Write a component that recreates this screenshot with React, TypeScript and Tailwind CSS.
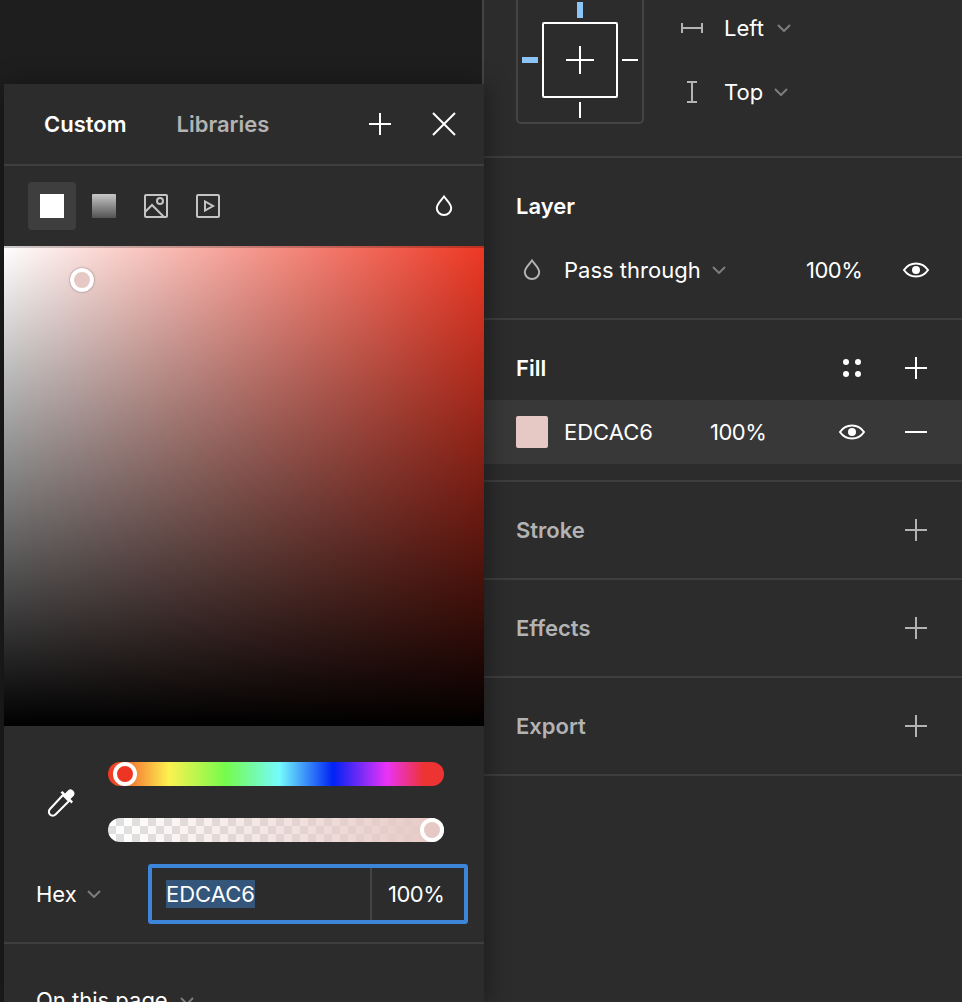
const Plus = ({ color = "#ffffff" }: { color?: string }) => (
  <svg width="32" height="32" viewBox="0 0 32 32" fill="none" stroke={color} strokeWidth="2">
    <path d="M5 16H27M16 5V27" />
  </svg>
);

const Eye = () => (
  <svg width="32" height="32" viewBox="0 0 32 32" fill="none">
    <path d="M4 16C7 11.5 11 9.5 16 9.5C21 9.5 25 11.5 28 16C25 20.5 21 22.5 16 22.5C11 22.5 7 20.5 4 16Z" stroke="#ffffff" strokeWidth="2" />
    <circle cx="16" cy="16" r="4" fill="#ffffff" />
  </svg>
);

const Drop = ({ color }: { color: string }) => (
  <svg width="32" height="32" viewBox="0 0 32 32" fill="none">
    <path d="M16 6.5C13 10.5 8.8 14 8.8 18C8.8 22.2 12 25 16 25C20 25 23.2 22.2 23.2 18C23.2 14 19 10.5 16 6.5Z" stroke={color} strokeWidth="2" />
  </svg>
);

const Chevron = () => (
  <svg width="14" height="8" viewBox="0 0 14 8" fill="none" stroke="#7d7d7d" strokeWidth="2">
    <path d="M1 1L7 7L13 1" />
  </svg>
);

function Constraints() {
  return (
    <svg width="128" height="128" viewBox="0 0 128 128" fill="none" className="shrink-0">
      <rect x="1" y="1" width="126" height="126" rx="4" stroke="#444444" strokeWidth="2" />
      <rect x="27" y="27" width="74" height="74" rx="1" stroke="#ffffff" strokeWidth="2" />
      <path d="M50 64H78M64 50V78" stroke="#ffffff" strokeWidth="2" />
      <rect x="61" y="6" width="6" height="16" fill="#8cc4f5" />
      <rect x="6" y="61" width="16" height="6" fill="#8cc4f5" />
      <path d="M106 64H122M64 106V122" stroke="#ffffff" strokeWidth="2" />
    </svg>
  );
}

function SectionHead({ title, dim }: { title: string; dim?: boolean }) {
  return (
    <div className="flex h-[64px] items-center justify-between pl-[32px] pr-[30px]">
      <span className={`text-[22px] font-semibold ${dim ? "text-[#b3b3b3]" : "text-white"}`}>{title}</span>
      <Plus color={dim ? "#b3b3b3" : "#ffffff"} />
    </div>
  );
}

function RightPanel() {
  return (
    <div className="flex h-full flex-1 flex-col bg-[#2c2c2c] text-[22px] text-white">
      {/* constraints */}
      <div className="h-[158px] shrink-0 border-b-2 border-[#3e3e3e] pl-[32px]">
        <div className="-mt-[4px] flex">
          <Constraints />
          <div className="ml-[36px] flex flex-col">
            <div className="flex h-[64px] items-center">
              <svg width="24" height="12" viewBox="0 0 24 12" fill="none" stroke="#b3b3b3" strokeWidth="2">
                <path d="M2 1V11M22 1V11M2 6H22" />
              </svg>
              <span className="ml-[20px]">Left</span>
              <span className="ml-[13px] flex"><Chevron /></span>
            </div>
            <div className="flex h-[64px] items-center">
              <svg width="24" height="24" viewBox="0 0 24 24" fill="none" stroke="#b3b3b3" strokeWidth="2">
                <path d="M7 2H17M7 22H17M12 2V22" />
              </svg>
              <span className="ml-[20px]">Top</span>
              <span className="ml-[11px] flex"><Chevron /></span>
            </div>
          </div>
        </div>
      </div>

      {/* layer */}
      <div className="h-[162px] shrink-0 border-b-2 border-[#3e3e3e] pt-[16px]">
        <div className="flex h-[64px] items-center pl-[32px]">
          <span className="text-[22px] font-semibold">Layer</span>
        </div>
        <div className="flex h-[64px] items-center pl-[32px] pr-[30px]">
          <Drop color="#b3b3b3" />
          <div className="ml-[16px] flex w-[242px] items-center gap-[11px]">
            <span>Pass through</span>
            <Chevron />
          </div>
          <span className="tracking-[-0.5px]">100%</span>
          <div className="ml-auto flex"><Eye /></div>
        </div>
      </div>

      {/* fill */}
      <div className="h-[162px] shrink-0 border-b-2 border-[#3e3e3e] pt-[16px]">
        <div className="flex h-[64px] items-center justify-between pl-[32px] pr-[30px]">
          <span className="text-[22px] font-semibold">Fill</span>
          <div className="flex items-center gap-[32px]">
            <svg width="32" height="32" viewBox="0 0 32 32" fill="#ffffff">
              <circle cx="10" cy="10" r="3" />
              <circle cx="22" cy="10" r="3" />
              <circle cx="10" cy="22" r="3" />
              <circle cx="22" cy="22" r="3" />
            </svg>
            <Plus />
          </div>
        </div>
        <div className="flex h-[64px] items-center bg-[#383838] pl-[32px] pr-[30px]">
          <div className="h-[32px] w-[32px] rounded-[2px] bg-[#e6c9c5]" />
          <span className="ml-[16px] w-[146px]">EDCAC6</span>
          <span className="tracking-[-0.5px]">100%</span>
          <div className="ml-auto flex items-center gap-[32px]">
            <Eye />
            <svg width="32" height="32" viewBox="0 0 32 32" fill="none" stroke="#ffffff" strokeWidth="2">
              <path d="M5 16H27" />
            </svg>
          </div>
        </div>
      </div>

      {["Stroke", "Effects", "Export"].map((title) => (
        <div key={title} className="h-[98px] shrink-0 border-b-2 border-[#3e3e3e] pt-[16px]">
          <SectionHead title={title} dim />
        </div>
      ))}
    </div>
  );
}

function ColorPicker() {
  return (
    <div className="absolute left-[4px] top-[84px] bottom-0 w-[480px] overflow-hidden bg-[#2c2c2c] text-[22px] text-white shadow-[0_2px_24px_rgba(0,0,0,0.45)]">
      {/* tabs */}
      <div className="flex h-[82px] items-center border-b-2 border-[#3e3e3e] pl-[40px] pr-[24px]">
        <span className="font-semibold">Custom</span>
        <span className="ml-[50px] font-semibold text-[#b3b3b3]">Libraries</span>
        <div className="ml-auto flex items-center gap-[32px]">
          <Plus />
          <svg width="32" height="32" viewBox="0 0 32 32" fill="none" stroke="#ffffff" strokeWidth="2">
            <path d="M5 5L27 27M27 5L5 27" />
          </svg>
        </div>
      </div>

      {/* fill types */}
      <div className="flex h-[80px] items-center pl-[24px] pr-[24px]">
        <div className="flex h-[48px] w-[48px] items-center justify-center rounded-[4px] bg-[#3e3e3e]">
          <div className="h-[24px] w-[24px] bg-white" />
        </div>
        <div className="ml-[4px] flex h-[48px] w-[48px] items-center justify-center">
          <div className="h-[24px] w-[24px] rounded-[1px] bg-gradient-to-b from-[#c8c8c8] to-[#555555]" />
        </div>
        <div className="ml-[4px] flex h-[48px] w-[48px] items-center justify-center">
          <svg width="24" height="24" viewBox="0 0 24 24" fill="none" stroke="#c4c4c4" strokeWidth="2">
            <rect x="1" y="1" width="22" height="22" rx="1" />
            <path d="M1 18L8 11L20 23" />
            <circle cx="16" cy="7" r="3" />
          </svg>
        </div>
        <div className="ml-[4px] flex h-[48px] w-[48px] items-center justify-center">
          <svg width="24" height="24" viewBox="0 0 24 24" fill="none" stroke="#c4c4c4" strokeWidth="2">
            <rect x="1" y="1" width="22" height="22" rx="1" />
            <path d="M9 7.5V16.5L17 12Z" />
          </svg>
        </div>
        <div className="ml-auto flex"><Drop color="#ffffff" /></div>
      </div>

      {/* saturation / brightness */}
      <div className="relative h-[480px] bg-[linear-gradient(to_top,#000000,rgba(0,0,0,0)),linear-gradient(to_right,#ffffff,#ee3824)]">
        <div className="h-[2px] bg-black/20" />
        <div className="absolute left-[66px] top-[22px] h-[24px] w-[24px] rounded-full border-[4px] border-white bg-[#e6c9c5] shadow-[0_0_2px_rgba(0,0,0,0.5)]" />
      </div>

      {/* sliders */}
      <div className="flex pl-[42px] pt-[36px]">
        <div className="flex w-[32px] items-center">
          <svg width="32" height="32" viewBox="0 0 32 32" fill="none">
            <path d="M17 9L23 15L9.5 28.5C8 30 5.5 30 4 28.5C2.5 27 2.5 24.5 4 23Z" stroke="#ffffff" strokeWidth="2" strokeLinejoin="round" />
            <path d="M14.5 6.5L25.5 17.5L27 15.5L24.5 13L28 9.5C30 7 26 1.5 22.5 4L19 7.5L16.5 5Z" fill="#ffffff" />
          </svg>
        </div>
        <div className="ml-[30px] flex w-[336px] flex-col gap-[32px]">
          <div className="relative h-[24px] rounded-full bg-[linear-gradient(to_right,#ee3524_0%,#fdf14f_18%,#75fb4c_35%,#75fbfd_51%,#0022f5_67%,#ea33f7_83%,#ee3333_94%,#ee3333_100%)]">
            <div className="absolute left-[5px] top-0 h-[24px] w-[24px] rounded-full border-[4px] border-white bg-[#ee3524]" />
          </div>
          <div className="relative h-[24px] rounded-full bg-[linear-gradient(to_right,rgba(237,202,198,0),#e6c9c5),repeating-conic-gradient(#e0e0e0_0_25%,#ffffff_0_50%)] bg-[size:100%_100%,16px_16px]">
            <div className="absolute right-0 top-0 h-[24px] w-[24px] rounded-full border-[4px] border-white bg-[#e6c9c5]" />
          </div>
        </div>
      </div>

      {/* hex input */}
      <div className="mt-[22px] flex items-center pl-[32px]">
        <span className="w-[51px]">Hex</span>
        <span className="flex"><Chevron /></span>
        <div className="ml-[47px] flex h-[60px] w-[320px] items-center rounded-[3px] border-[4px] border-[#3c85d8]">
          <div className="flex h-full w-[220px] items-center border-r-2 border-[#444444] pl-[14px]">
            <span className="bg-[#34567a] leading-[28px]">EDCAC6</span>
          </div>
          <span className="ml-[16px] tracking-[-0.5px]">100%</span>
        </div>
      </div>

      <div className="mt-[18px] h-[2px] bg-[#3e3e3e]" />

      <div className="flex items-center gap-[12px] pl-[32px] pt-[40px]">
        <span>On this page</span>
        <Chevron />
      </div>
    </div>
  );
}

export default function App() {
  return (
    <div className="relative flex h-[1002px] w-[962px] overflow-hidden bg-[#1e1e1e] font-['Inter',sans-serif]">
      <div className="h-full w-[484px] shrink-0 border-r-2 border-[#444444] bg-[#1e1e1e]" />
      <RightPanel />
      <ColorPicker />
    </div>
  );
}
